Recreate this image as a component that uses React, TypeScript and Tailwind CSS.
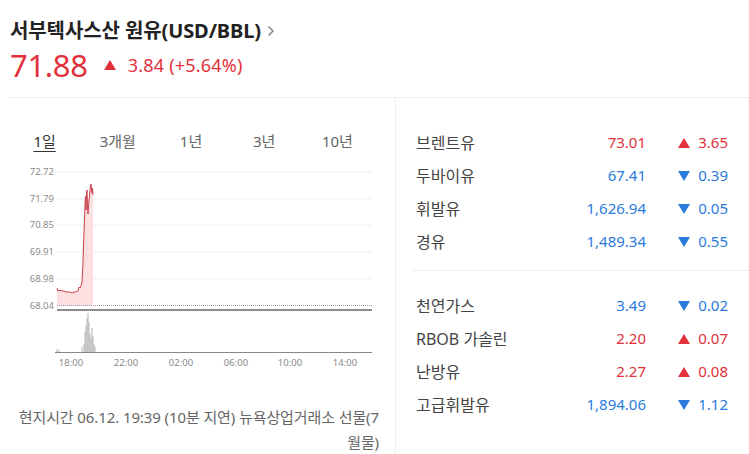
import React from 'react';

const RED = '#e2313c';
const BLUE = '#2a7bdc';

interface Quote {
  name: string;
  value: string;
  change: string;
  up: boolean;
}

const groupA: Quote[] = [
  { name: '브렌트유', value: '73.01', change: '3.65', up: true },
  { name: '두바이유', value: '67.41', change: '0.39', up: false },
  { name: '휘발유', value: '1,626.94', change: '0.05', up: false },
  { name: '경유', value: '1,489.34', change: '0.55', up: false },
];

const groupB: Quote[] = [
  { name: '천연가스', value: '3.49', change: '0.02', up: false },
  { name: 'RBOB 가솔린', value: '2.20', change: '0.07', up: true },
  { name: '난방유', value: '2.27', change: '0.08', up: true },
  { name: '고급휘발유', value: '1,894.06', change: '1.12', up: false },
];

const tabs = ['1일', '3개월', '1년', '3년', '10년'];

const yLabels = [
  { v: '72.72', y: 172 },
  { v: '71.79', y: 199 },
  { v: '70.85', y: 225 },
  { v: '69.91', y: 252 },
  { v: '68.98', y: 279 },
];

const xLabels = [
  { t: '18:00', x: 71 },
  { t: '22:00', x: 126 },
  { t: '02:00', x: 181 },
  { t: '06:00', x: 236 },
  { t: '10:00', x: 290 },
  { t: '14:00', x: 345 },
];

const pricePts: [number, number][] = [
  [57, 288], [58, 291], [59, 290], [60, 291], [61, 290], [62, 291], [64, 291], [66, 292],
  [68, 292], [70, 292], [72, 293], [74, 292], [76, 292], [78, 291], [79, 287], [80, 288],
  [81, 286], [82, 282], [83, 262], [84, 232], [85, 205], [85.5, 196], [86, 210], [86.5, 194],
  [87, 190], [87.5, 205], [88, 214], [88.5, 206], [89, 200], [89.5, 196], [90, 190],
  [90.5, 186], [91, 184], [91.5, 190], [92, 193], [92.5, 188], [93, 195],
];

const volBars: [number, number][] = [
  [57, 349], [59, 350], [82, 347], [84, 344], [85, 332], [86, 326], [87, 318], [88, 313],
  [89, 322], [90, 334], [91, 338], [92, 328], [93, 336], [94, 344], [95, 347],
];

function Tri({ up }: { up: boolean }) {
  return (
    <svg width="12" height="10" viewBox="0 0 12 10">
      {up ? (
        <polygon points="6,0 12,10 0,10" fill={RED} />
      ) : (
        <polygon points="0,0 12,0 6,10" fill={BLUE} />
      )}
    </svg>
  );
}

function Row({ q }: { q: Quote }) {
  const color = q.up ? RED : BLUE;
  return (
    <div className="flex h-[33px] items-center text-[15px]">
      <span className="flex-1 text-[16px] text-[#444]">{q.name}</span>
      <span className="w-[120px] text-right" style={{ color }}>
        {q.value}
      </span>
      <span className="ml-[32px] flex w-[50px] items-center justify-between" style={{ color }}>
        <Tri up={q.up} />
        <span>{q.change}</span>
      </span>
    </div>
  );
}

function Chart() {
  const line = pricePts.map(([x, y]) => `${x},${y}`).join(' ');
  const area = `57,306 ${line} 93,306`;
  return (
    <svg width="380" height="212" viewBox="8 162 380 212" className="block">
      {yLabels.map((l) => (
        <g key={l.v}>
          <line x1="57" x2="372" y1={l.y} y2={l.y} stroke="#efefef" strokeWidth="1" />
          <text x="54" y={l.y + 3} textAnchor="end" fontSize="9.5" fill="#8a8a8a">
            {l.v}
          </text>
        </g>
      ))}
      <polygon points={area} fill="#fcdfe1" />
      <polyline points={line} fill="none" stroke="#c9424b" strokeWidth="1" />
      <text x="54" y="309" textAnchor="end" fontSize="9.5" fill="#8a8a8a">
        68.04
      </text>
      <line x1="57" x2="372" y1="305.5" y2="305.5" stroke="#999" strokeWidth="1" strokeDasharray="1 1" />
      <line x1="57" x2="372" y1="310" y2="310" stroke="#666" strokeWidth="1.5" />
      {volBars.map(([x, y]) => (
        <line key={x} x1={x} x2={x} y1={y} y2="352" stroke="#b3b3b3" strokeWidth="1" />
      ))}
      <line x1="55" x2="372" y1="352.5" y2="352.5" stroke="#888" strokeWidth="1" />
      {xLabels.map((l) => (
        <text key={l.t} x={l.x} y="366" textAnchor="middle" fontSize="9.5" fill="#8a8a8a">
          {l.t}
        </text>
      ))}
    </svg>
  );
}

export default function App() {
  return (
    <div
      className="h-[454px] w-[749px] overflow-hidden bg-white"
      style={{ fontFamily: '"Noto Sans", "Noto Sans CJK KR", sans-serif' }}
    >
      {/* Header */}
      <div className="px-[10px] pt-[17px]">
        <div className="flex h-[28px] items-center">
          <span className="text-[20px] font-bold tracking-[-0.1px] text-[#222]">
            서부텍사스산 원유(USD/BBL)
          </span>
          <svg width="8" height="12" viewBox="0 0 8 12" className="ml-[6px]">
            <polyline points="1.5,1.5 6,6 1.5,10.5" fill="none" stroke="#888" strokeWidth="1.5" />
          </svg>
        </div>
        <div className="flex h-[40px] items-center" style={{ color: RED }}>
          <span className="text-[31px] leading-none tracking-[-0.3px]">71.88</span>
          <span className="ml-[16px] flex items-center">
            <Tri up />
          </span>
          <span className="ml-[12px] text-[18px] tracking-[0.2px]">3.84 (+5.64%)</span>
        </div>
      </div>

      {/* Body */}
      <div className="ml-[8px] mt-[12px] flex border-t border-[#eeeeee]">
        {/* Left: chart */}
        <div className="w-[387px]">
          <div className="grid w-[366px] grid-cols-5 pt-[32px] text-[15px] text-[#666]">
            {tabs.map((t, i) => (
              <div key={t} className="flex h-[22px] items-center justify-center">
                <span
                  className={
                    i === 0
                      ? 'text-[#333] underline decoration-[#333] underline-offset-[4px]'
                      : ''
                  }
                >
                  {t}
                </span>
              </div>
            ))}
          </div>
          <div className="mt-[10px]">
            <Chart />
          </div>
          <div className="mt-[31px] pr-[16px] text-right text-[15px] leading-[25px] tracking-[-0.1px] text-[#666]">
            <div className="whitespace-nowrap">현지시간 06.12. 19:39 (10분 지연) 뉴욕상업거래소 선물(7</div>
            <div className="whitespace-nowrap">월물)</div>
          </div>
        </div>

        {/* Right: quotes */}
        <div className="h-[360px] flex-1 border-l border-[#eeeeee] pt-[28px]">
          <div className="pl-[20px] pr-[21px]">
            {groupA.map((q) => (
              <Row key={q.name} q={q} />
            ))}
          </div>
          <div className="ml-[16px] mt-[12px] border-t border-[#eeeeee]" />
          <div className="pl-[20px] pr-[21px] pt-[18px]">
            {groupB.map((q) => (
              <Row key={q.name} q={q} />
            ))}
          </div>
        </div>
      </div>
    </div>
  );
}
